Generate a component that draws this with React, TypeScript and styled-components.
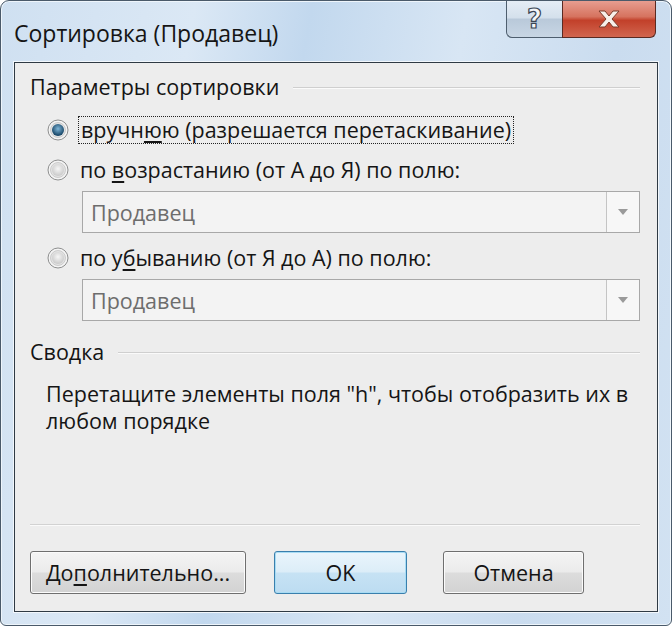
import styled, { createGlobalStyle } from 'styled-components';

const GlobalStyle = createGlobalStyle`
  html, body {
    margin: 0;
    padding: 0;
    background: #ffffff;
  }
  body {
    font-family: 'Open Sans', 'Noto Sans', 'DejaVu Sans', sans-serif;
  }
`;

const RadioButton = ({ checked }: { checked?: boolean }) => (
  <RadioCircle>
    <svg width="22" height="22" viewBox="0 0 22 22">
      <defs>
        <radialGradient id={checked ? 'rgOn' : 'rgOff'} cx="50%" cy="40%" r="60%">
          <stop offset="0%" stopColor={checked ? '#7fb6d8' : '#f6f6f6'} />
          <stop offset="100%" stopColor={checked ? '#0f3d5e' : '#c9c9c9'} />
        </radialGradient>
      </defs>
      <circle cx="11" cy="11" r="10" fill="#f4f4f4" stroke="#8e8f8f" strokeWidth="1" />
      <circle cx="11" cy="11" r="7.5" fill="#e2e2e2" stroke="#c4c4c4" strokeWidth="0.8" />
      <circle cx="11" cy="11" r="6" fill={`url(#${checked ? 'rgOn' : 'rgOff'})`} />
    </svg>
  </RadioCircle>
);

const ComboBox = ({ value }: { value: string }) => (
  <Combo>
    <ComboText>{value}</ComboText>
    <ComboButton>
      <svg width="12" height="8" viewBox="0 0 12 8">
        <path d="M1 1 H11 L6 7 Z" fill="#9a9a9a" />
      </svg>
    </ComboButton>
  </Combo>
);

const App = () => {
  return (
    <>
      <GlobalStyle />
      <Window>
        <TitleBar>
          <Title>Сортировка (Продавец)</Title>
          <CaptionButtons>
            <HelpButton>?</HelpButton>
            <CloseButton>
              <svg width="26" height="20" viewBox="0 0 26 20">
                <path
                  d="M3 2 L9 2 L13 7 L17 2 L23 2 L16 10 L23 18 L17 18 L13 13 L9 18 L3 18 L10 10 Z"
                  fill="#f7efe9"
                  stroke="#7a3a2a"
                  strokeWidth="1"
                  strokeLinejoin="round"
                />
              </svg>
            </CloseButton>
          </CaptionButtons>
        </TitleBar>
        <Panel>
          <GroupHeader>
            <GroupTitle>Параметры сортировки</GroupTitle>
            <GroupLine />
          </GroupHeader>
          <RadioRow $top={16}>
            <RadioButton checked />
            <FocusLabel>
              вручн<u>ю</u>ю (разрешается перетаскивание)
            </FocusLabel>
          </RadioRow>
          <RadioRow $top={12}>
            <RadioButton />
            <Label>
              по <u>в</u>озрастанию (от А до Я) по полю:
            </Label>
          </RadioRow>
          <ComboRow $top={7}>
            <ComboBox value="Продавец" />
          </ComboRow>
          <RadioRow $top={11}>
            <RadioButton />
            <Label>
              по у<u>б</u>ыванию (от Я до А) по полю:
            </Label>
          </RadioRow>
          <ComboRow $top={7}>
            <ComboBox value="Продавец" />
          </ComboRow>
          <GroupHeader $top={18}>
            <GroupTitle>Сводка</GroupTitle>
            <GroupLine />
          </GroupHeader>
          <Summary>
            Перетащите элементы поля "h", чтобы отобразить их в
            <br />
            любом порядке
          </Summary>
          <Spacer />
          <BottomLine />
          <ButtonRow>
            <DialogButton $width={216}>
              До<u>п</u>олнительно...
            </DialogButton>
            <DialogButton $width={133} $primary $left={28}>
              OK
            </DialogButton>
            <DialogButton $width={141} $left={36}>
              Отмена
            </DialogButton>
          </ButtonRow>
        </Panel>
      </Window>
    </>
  );
};

const Window = styled.div`
  width: 672px;
  height: 626px;
  box-sizing: border-box;
  border: 1px solid #4a5a6a;
  border-radius: 9px 9px 6px 6px;
  background: linear-gradient(
    100deg,
    #cfe0f1 0%,
    #dbe8f5 25%,
    #c2d8ee 40%,
    #d8e6f4 60%,
    #cadcef 80%,
    #d2e2f2 100%
  );
  display: flex;
  flex-direction: column;
  overflow: hidden;
  box-shadow: inset 0 0 0 1px #eef5fb;
`;

const TitleBar = styled.div`
  height: 61px;
  display: flex;
  align-items: flex-start;
  justify-content: space-between;
  padding-left: 13px;
  padding-right: 15px;
`;

const Title = styled.div`
  margin-top: 16px;
  font-size: 23px;
  color: #151515;
`;

const CaptionButtons = styled.div`
  display: flex;
  margin-top: -1px;
`;

const HelpButton = styled.div`
  width: 56px;
  height: 38px;
  box-sizing: border-box;
  border: 1px solid #4e5e6e;
  border-right: none;
  border-top: none;
  border-radius: 0 0 0 6px;
  background: linear-gradient(180deg, #e6eef6 0%, #d4e0ec 48%, #b9c9da 52%, #c8d6e4 100%);
  display: flex;
  align-items: center;
  justify-content: center;
  font-family: 'DejaVu Sans', sans-serif;
  font-weight: bold;
  font-size: 26px;
  color: #f4f6f8;
  -webkit-text-stroke: 1.2px #3a4654;
`;

const CloseButton = styled.div`
  width: 94px;
  height: 38px;
  box-sizing: border-box;
  border: 1px solid #5a2a22;
  border-top: none;
  border-radius: 0 0 6px 0;
  background: linear-gradient(180deg, #e8a093 0%, #d6735f 45%, #c2402a 55%, #d1664f 100%);
  display: flex;
  align-items: center;
  justify-content: center;
`;

const Panel = styled.div`
  flex: 1;
  margin: 0 13px 13px 13px;
  border: 1px solid #2f3a44;
  background: #ededed;
  display: flex;
  flex-direction: column;
  padding: 0 17px 0 15px;
  color: #111;
  font-size: 21.5px;
  box-shadow: 0 0 0 1px #f2f7fc;
`;

const GroupHeader = styled.div<{ $top?: number }>`
  display: flex;
  align-items: center;
  margin-top: ${(p) => (p.$top ?? 11)}px;
  gap: 14px;
`;

const GroupTitle = styled.div`
  font-size: 21.5px;
  line-height: 26px;
  color: #141414;
  white-space: nowrap;
`;

const GroupLine = styled.div`
  flex: 1;
  height: 1px;
  background: #cfcfcf;
  border-bottom: 1px solid #fafafa;
  margin-top: 2px;
`;

const RadioRow = styled.div<{ $top: number }>`
  display: flex;
  align-items: center;
  margin-top: ${(p) => p.$top}px;
  padding-left: 17px;
  gap: 9px;
  height: 28px;
`;

const RadioCircle = styled.div`
  width: 22px;
  height: 22px;
  display: flex;
`;

const Label = styled.div`
  font-size: 21.5px;
  line-height: 26px;
  color: #151515;
  white-space: nowrap;
  padding: 0 2px;

  u {
    text-underline-offset: 3px;
  }
`;

const FocusLabel = styled(Label)`
  border: 1px dotted #222;
  padding: 0 2px;
`;

const ComboRow = styled.div<{ $top: number }>`
  margin-top: ${(p) => p.$top}px;
  padding-left: 52px;
`;

const Combo = styled.div`
  height: 42px;
  box-sizing: border-box;
  border: 1px solid #a8a8a8;
  background: #f3f3f3;
  display: flex;
  align-items: stretch;
`;

const ComboText = styled.div`
  flex: 1;
  display: flex;
  align-items: center;
  padding-left: 8px;
  font-size: 21.5px;
  color: #6d6d6d;
`;

const ComboButton = styled.div`
  width: 32px;
  border-left: 1px solid #c4c4c4;
  background: #f7f7f7;
  display: flex;
  align-items: center;
  justify-content: center;
`;

const Summary = styled.div`
  margin-top: 15px;
  padding-left: 16px;
  font-size: 21.5px;
  line-height: 27px;
  color: #151515;
`;

const Spacer = styled.div`
  flex: 1;
`;

const BottomLine = styled.div`
  height: 1px;
  background: #d2d2d2;
  border-bottom: 1px solid #fafafa;
`;

const ButtonRow = styled.div`
  display: flex;
  margin-top: 25px;
  margin-bottom: 17px;
`;

const DialogButton = styled.div<{ $width: number; $primary?: boolean; $left?: number }>`
  width: ${(p) => p.$width}px;
  height: 43px;
  margin-left: ${(p) => p.$left ?? 0}px;
  box-sizing: border-box;
  border: 1px solid ${(p) => (p.$primary ? '#3a7fad' : '#6f6f6f')};
  border-radius: 3px;
  background: ${(p) =>
    p.$primary
      ? 'linear-gradient(180deg, #eaf5fc 0%, #dcedf8 48%, #c6e2f4 52%, #bcdcf1 100%)'
      : 'linear-gradient(180deg, #f4f4f4 0%, #ebebeb 48%, #dcdcdc 52%, #d2d2d2 100%)'};
  box-shadow: inset 0 0 0 1px ${(p) => (p.$primary ? '#a8dcf4' : '#fbfbfb')};
  display: flex;
  align-items: center;
  justify-content: center;
  font-size: 21.5px;
  color: #151515;

  u {
    text-underline-offset: 3px;
  }
`;

export default App;
